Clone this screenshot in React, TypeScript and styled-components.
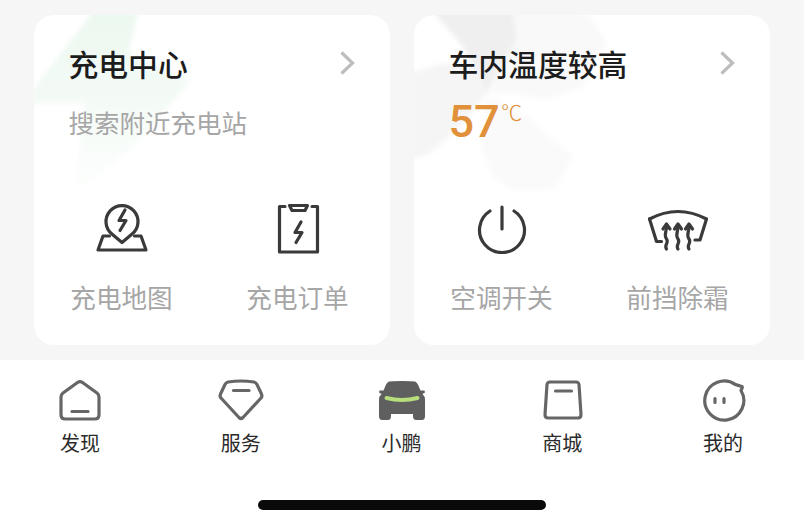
import React from "react";
import styled, { createGlobalStyle } from "styled-components";

const GlobalStyle = createGlobalStyle`
  html, body {
    margin: 0;
    padding: 0;
    background: #f6f6f6;
    font-family: "Noto Sans CJK SC", "Noto Sans", sans-serif;
  }
`;

const Page = styled.div`
  width: 804px;
  height: 526px;
  display: flex;
  flex-direction: column;
  overflow: hidden;
`;

const CardArea = styled.div`
  display: grid;
  grid-template-columns: 356px 356px;
  gap: 24px;
  padding: 15px 34px;
`;

const Card = styled.section`
  position: relative;
  height: 330px;
  background: #fff;
  border-radius: 20px;
  overflow: hidden;
`;

const CardArt = styled.svg`
  position: absolute;
  left: -4px;
  top: -5px;
  filter: blur(2.5px);
`;

const CardHead = styled.div`
  position: relative;
  height: 183px;
  box-sizing: border-box;
  padding: 30px 35px 0 34.5px;
`;

const TitleRow = styled.div`
  display: flex;
  align-items: center;
  justify-content: space-between;
`;

const Title = styled.h2`
  margin: 0;
  font-size: 29.8px;
  line-height: 36px;
  font-weight: 500;
  color: #1c1c1c;
`;

const Subtitle = styled.p`
  margin: 23px 0 0;
  font-size: 25.5px;
  line-height: 36px;
  font-weight: 400;
  color: #a6a6a6;
`;

const Temperature = styled.div`
  display: flex;
  align-items: flex-start;
  margin-top: 14px;
  color: #e0913a;
`;

const TempValue = styled.span`
  font-family: "Roboto", sans-serif;
  font-size: 45px;
  line-height: 54px;
  font-weight: 500;
`;

const TempUnit = styled.span`
  font-size: 21px;
  line-height: 24px;
  font-weight: 300;
  margin: 4px 0 0 1.5px;
`;

const Actions = styled.div`
  position: relative;
  display: grid;
  grid-template-columns: 176px 176px;
`;

const Action = styled.div`
  display: flex;
  flex-direction: column;
  align-items: center;
`;

const ActionLabel = styled.span`
  margin: 25px 1px 0 0;
  font-size: 25.6px;
  line-height: 36px;
  color: #a6a6a6;
`;

const TabBar = styled.nav`
  flex: 1;
  display: flex;
  flex-direction: column;
  background: #fff;
  padding-top: 18px;
`;

const Tabs = styled.div`
  display: grid;
  grid-template-columns: repeat(5, 1fr);
`;

const Tab = styled.div`
  display: flex;
  flex-direction: column;
  align-items: center;
`;

const TabLabel = styled.span`
  margin: 9px 1px 0 0;
  font-size: 20px;
  line-height: 24px;
  color: #2a2a2a;
`;

const HomeIndicator = styled.div`
  align-self: center;
  width: 288px;
  height: 10px;
  margin-top: 45px;
  border-radius: 5px;
  background: #0a0a0a;
`;

const Chevron = () => (
  <svg width="16" height="26" viewBox="0 0 16 26" fill="none">
    <path d="M2.500 2.500L13.500 13L2.500 23.500" stroke="#bdbdbd" strokeWidth="3.200" />
  </svg>
);

const ActionIcon: React.FC<{ children: React.ReactNode }> = ({ children }) => (
  <svg
    width="60"
    height="56"
    viewBox="0 0 60 56"
    fill="none"
    stroke="#3a3a3a"
    strokeWidth="3.200"
    strokeLinecap="round"
    strokeLinejoin="round"
  >
    {children}
  </svg>
);

const TabIcon: React.FC<{ children: React.ReactNode }> = ({ children }) => (
  <svg
    width="48"
    height="44"
    viewBox="0 0 48 44"
    fill="none"
    stroke="#666"
    strokeWidth="3.200"
    strokeLinecap="round"
    strokeLinejoin="round"
  >
    {children}
  </svg>
);

const boltPath = (x: number, y: number) =>
  `M${x + 3} ${y - 10}l-6 10.5h7l-6 10`;

const App = () => (
  <Page>
    <GlobalStyle />
    <CardArea>
      <Card>
        <CardArt width="370" height="180" viewBox="0 0 1110 540">
          <defs>
            <linearGradient id="boltFill" x1="0" y1="0" x2="0" y2="1">
              <stop offset="0" stopColor="#ebf8ef" />
              <stop offset="0.55" stopColor="#f5fbf7" />
              <stop offset="1" stopColor="#fefffe" />
            </linearGradient>
          </defs>
          <path
            d="M195 0H325L295 130L480 215L300 420L130 560L165 280H0V250Z"
            fill="url(#boltFill)"
          />
        </CardArt>
        <CardHead>
          <TitleRow>
            <Title>充电中心</Title>
            <Chevron />
          </TitleRow>
          <Subtitle>搜索附近充电站</Subtitle>
        </CardHead>
        <Actions>
          <Action>
            <ActionIcon>
              <path d="M20.500 36.500A16 16 0 1 1 39.500 36.500L30 44.500Z" />
              <path d="M17.500 38H11L6 52H54L49 38H42.500" />
              <path d={boltPath(30, 22)} />
            </ActionIcon>
            <ActionLabel>充电地图</ActionLabel>
          </Action>
          <Action>
            <ActionIcon>
              <path d="M17 8.500H11.500V54H49.500V8.500H44" />
              <path d="M21.500 7.500H39.500L37 12.500H24Z" />
              <path d={boltPath(30, 34)} />
            </ActionIcon>
            <ActionLabel>充电订单</ActionLabel>
          </Action>
        </Actions>
      </Card>
      <Card>
        <CardArt width="370" height="180" viewBox="0 0 1110 540">
          <path d="M65 0H310L320 90L230 250L160 110Z" fill="#efeff0" />
          <path
            d="M310 0H460L540 20L590 100L520 230L400 270L320 250L240 250L320 90Z"
            fill="#f9f9f9"
          />
          <path
            d="M0 190L100 160L200 170L230 250L160 340L60 430L0 450Z"
            fill="#f5f5f5"
          />
          <path
            d="M230 255L350 320L490 440L430 540H300L250 500L215 420Z"
            fill="#fafafa"
          />
        </CardArt>
        <CardHead>
          <TitleRow>
            <Title>车内温度较高</Title>
            <Chevron />
          </TitleRow>
          <Temperature>
            <TempValue>57</TempValue>
            <TempUnit>℃</TempUnit>
          </Temperature>
        </CardHead>
        <Actions>
          <Action>
            <ActionIcon>
              <path d="M18 13A22.500 22.500 0 1 0 42 13" />
              <path d="M30 9V31" />
            </ActionIcon>
            <ActionLabel>空调开关</ActionLabel>
          </Action>
          <Action>
            <ActionIcon>
              <path d="M1.500 21Q30 6 58.500 21L52 42H47" />
              <path d="M1.500 21L8.500 43.500H13.500" />
              <path d="M18.500 51c-3-4 3-6 0-10s0-7 0-12M30 51c-3-4 3-6 0-10s0-7 0-12M41 51c-3-4 3-6 0-10s0-7 0-12" />
              <path d="M15 31l3.500-5 3.500 5M26.500 31l3.500-5 3.500 5M37.500 31l3.500-5 3.500 5" />
            </ActionIcon>
            <ActionLabel>前挡除霜</ActionLabel>
          </Action>
        </Actions>
      </Card>
    </CardArea>
    <TabBar>
      <Tabs>
        <Tab>
          <TabIcon>
            <path d="M21.500 4.500Q24 2.800 26.500 4.500L41 15Q43 16.500 43 19V37Q43 41 39 41H9Q5 41 5 37V19Q5 16.500 7 15Z" />
            <path d="M16 33.500H32" />
          </TabIcon>
          <TabLabel>发现</TabLabel>
        </Tab>
        <Tab>
          <TabIcon>
            <path d="M11 4Q24 2 37 4Q39 4.500 40 6.500L44.500 16Q45.500 18.500 44 20L26 39.500Q24 41.500 22 39.500L4 20Q2.500 18.500 3.500 16L8 6.500Q9 4.500 11 4Z" />
            <path d="M16.500 12.500H32" />
          </TabIcon>
          <TabLabel>服务</TabLabel>
        </Tab>
        <Tab>
          <TabIcon>
            <path
              d="M11 3.500Q13 3 24 3T37 3.500Q39.500 4.500 41 9L42.500 12.500H46.500L47 14.500L44.500 16Q47 18 47 22V38Q47 42 44 42H38Q35 42 35 38V36H13V38Q13 42 10 42H4Q1 42 1 38V22Q1 18 3.500 16L1 14.500L1.500 12.500H5.500L7 9Q8.500 4.500 11 3.500Z"
              fill="#5f5f5f"
              stroke="none"
            />
            <path d="M8.500 20Q24 24 39.500 20" stroke="#b7dd7c" strokeWidth="4" />
          </TabIcon>
          <TabLabel>小鹏</TabLabel>
        </Tab>
        <Tab>
          <TabIcon>
            <path d="M11 4H37Q39.500 4 40 6.500L42 36.500Q42 40 39 40H9Q6 40 6 36.500L8 6.500Q8.500 4 11 4Z" />
            <path d="M16.500 13H32.500" />
          </TabIcon>
          <TabLabel>商城</TabLabel>
        </Tab>
        <Tab>
          <TabIcon>
            <path d="M35.500 6.600Q39 8 42 8.500Q43 9.500 41 12.500A19.500 19.500 0 1 1 35.500 6.600Z" />
            <path d="M15 20.500V24.500M24 20.500V24.500" />
          </TabIcon>
          <TabLabel>我的</TabLabel>
        </Tab>
      </Tabs>
      <HomeIndicator />
    </TabBar>
  </Page>
);

export default App;
